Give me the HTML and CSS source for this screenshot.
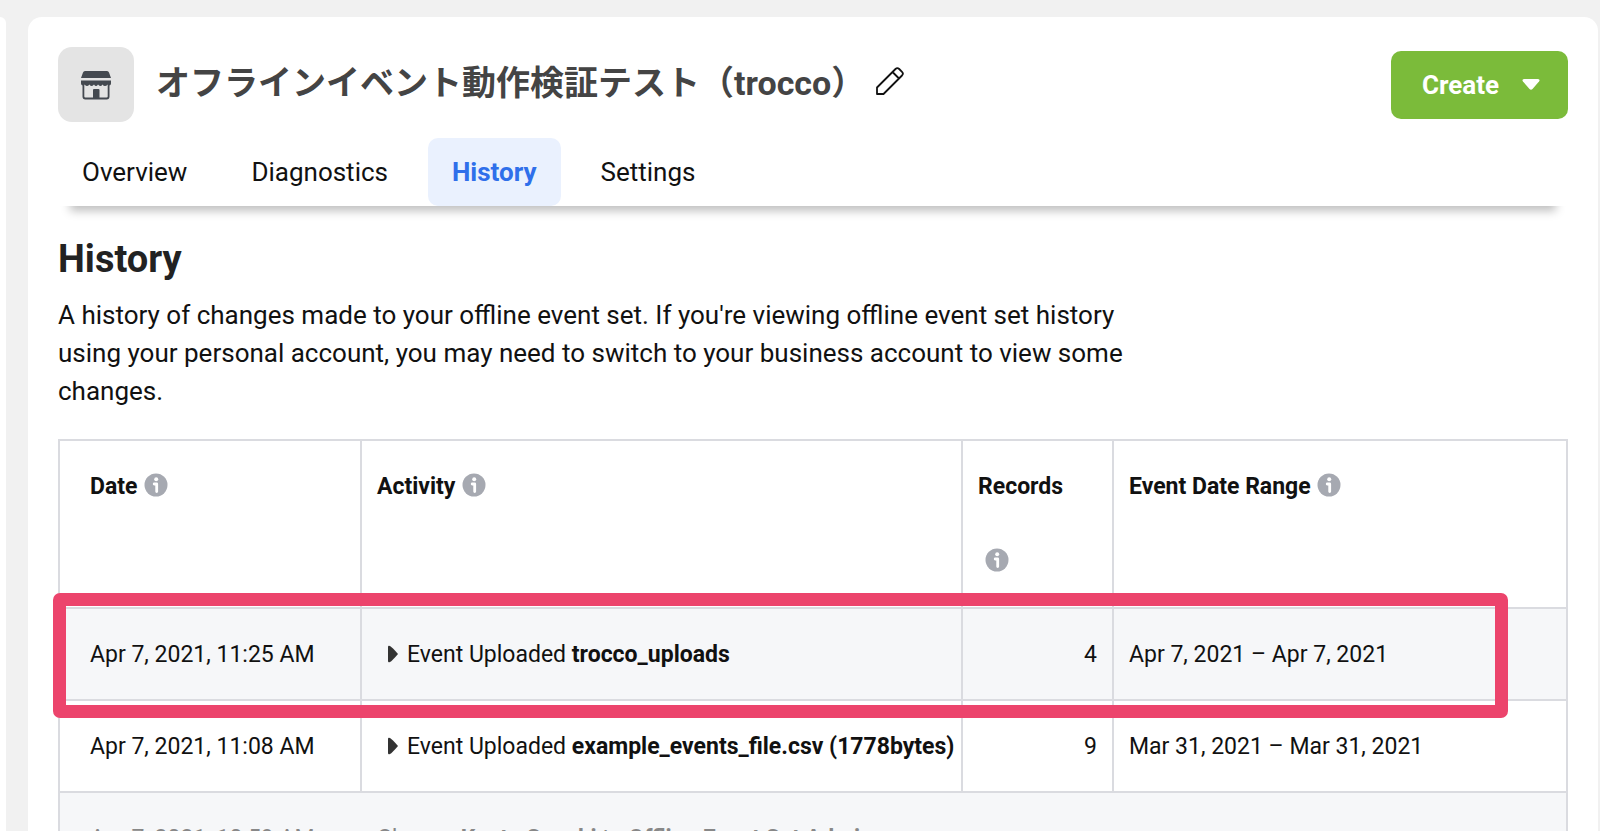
FILE: index.html
```
<!DOCTYPE html>
<html lang="en">
<head>
<meta charset="utf-8">
<title>History</title>
<link rel="stylesheet" href="styles.css">
</head>
<body>
<svg class="defs" aria-hidden="true">
  <symbol id="info" viewBox="0 0 24 24"><circle cx="12" cy="12" r="11.500" fill="#a6a9b1"/><circle cx="12.200" cy="6.200" r="2" fill="#fff"/><path d="M10.200 11h2.500v7.500" fill="none" stroke="#fff" stroke-width="2.800" stroke-linecap="round" stroke-linejoin="round"/></symbol>
  <symbol id="arrow" viewBox="0 0 12 18"><path d="M1 2Q1 0 3 1Q5 2 11 9Q5 16 3 17Q1 18 1 16Z" fill="#333"/></symbol>
</svg>
<div class="layout">
  <aside class="side"></aside>
  <main class="card">
    <header class="head">
      <div class="title-row">
        <div class="badge">
          <svg width="32" height="32" viewBox="0 0 32 32">
            <path d="M5 2h22q1.500 0 2 1.500L31 9H1L3 3.500Q3.500 2 5 2Z" fill="#444950"/>
            <path d="M1 11.500h30v3q0 2-2 2-1 0-1.500-1-1 1.500-2.500 1.500t-2.500-1.500q-1 1.500-2 1.500t-2.500-1.500q-1 1.500-2 1.500t-2-1.500q-1.500 1.500-2.500 1.500t-2-1.500q-1.500 1.500-2.500 1.500t-2.500-1.500q-.5 1-1.500 1-2 0-2-2Z" fill="#444950"/>
            <path d="M3.400 15v12.500q0 2 2 2h21.200q2 0 2-2V15" fill="none" stroke="#444950" stroke-width="1.800"/>
            <path d="M13 30v-9q0-1 1-1h4.500q1 0 1 1v9Z" fill="#444950"/>
          </svg>
        </div>
        <h1 class="title">オフラインイベント動作検証テスト（trocco）</h1>
        <button class="edit" aria-label="Edit name">
          <svg width="30" height="30" viewBox="0 0 30 30" fill="none" stroke="#111" stroke-width="1.800" stroke-linejoin="round"><path d="M2 28V21.500L20.500 3Q22.300 1.200 24.200 3L27 5.800Q28.800 7.600 27 9.500L8.500 28ZM17.500 6l6.500 6.500"/></svg>
        </button>
        <button class="create">Create
          <svg width="18" height="12" viewBox="0 0 18 12"><path d="M2 0h14q2.500 .5 1 2.500L10.500 10q-1.500 1.600-3 0L1 2.500Q-.5 .5 2 0Z" fill="#fff"/></svg>
        </button>
      </div>
      <nav class="tabs">
        <a class="tab" href="#overview">Overview</a>
        <a class="tab" href="#diagnostics">Diagnostics</a>
        <a class="tab active" href="#history">History</a>
        <a class="tab" href="#settings">Settings</a>
      </nav>
    </header>
    <section class="content">
      <h2 class="heading">History</h2>
      <p class="intro">A history of changes made to your offline event set. If you're viewing offline event set history using your personal account, you may need to switch to your business account to view some changes.</p>
      <div class="table-wrap">
        <table class="log">
          <colgroup><col class="c-date"><col class="c-activity"><col class="c-records"><col></colgroup>
          <thead>
            <tr>
              <th>Date <svg class="info"><use href="#info"/></svg></th>
              <th>Activity <svg class="info"><use href="#info"/></svg></th>
              <th>Records <svg class="info below"><use href="#info"/></svg></th>
              <th>Event Date Range <svg class="info"><use href="#info"/></svg></th>
            </tr>
          </thead>
          <tbody>
            <tr class="shade"><td>Apr 7, 2021, 11:25 AM</td><td><svg class="arrow"><use href="#arrow"/></svg>Event Uploaded <b>trocco_uploads</b></td><td class="num">4</td><td>Apr 7, 2021 – Apr 7, 2021</td></tr>
            <tr><td>Apr 7, 2021, 11:08 AM</td><td><svg class="arrow"><use href="#arrow"/></svg>Event Uploaded <b>example_events_file.csv (1778bytes)</b></td><td class="num">9</td><td>Mar 31, 2021 – Mar 31, 2021</td></tr>
            <tr class="shade muted"><td>Apr 7, 2021, 10:59 AM</td><td colspan="3">Change <b>Kento Suzuki</b> to <b>Offline Event Set Admin</b></td></tr>
          </tbody>
        </table>
        <div class="highlight"></div>
      </div>
    </section>
  </main>
</div>
</body>
</html>
```

FILE: styles.css
```
* { box-sizing: border-box; }
html, body { height: 100%; }
body {
  margin: 0;
  overflow: hidden;
  background: #f1f1f1;
  color: #111;
  font-family: Roboto, "Noto Sans CJK JP", sans-serif;
  font-size: 23px;
}
.defs { position: absolute; width: 0; height: 0; }
.layout { display: flex; gap: 22px; padding: 17px 2px 0 0; min-height: 100%; }
.side { width: 6px; background: #fff; border-radius: 0 14px 0 0; }
.card {
  position: relative; z-index: 0; flex: 1; min-width: 0;
  background: #fff; border-radius: 14px 14px 0 0; padding: 30px 30px 0;
}
.title-row { display: flex; align-items: center; height: 75px; }
.badge {
  display: flex; align-items: center; justify-content: center;
  width: 76px; height: 75px; border-radius: 14px; background: #e4e4e4;
}
.title { margin: 0 0 4px 22px; font-size: 34px; line-height: 48px; font-weight: 700; color: #444; white-space: nowrap; }
.edit { margin: 0 0 8px 10px; padding: 0; border: 0; background: none; line-height: 0; }
.create {
  display: flex; align-items: center; gap: 23px;
  margin-left: auto; height: 68px; padding: 0 28px 0 31px;
  border: 0; border-radius: 10px; background: #7bbb3a; color: #fff;
  font: 700 26px/30px Roboto, sans-serif;
}
.tabs { display: flex; gap: 16px; margin-top: 16px; position: relative; background: #fff; }
.head { position: relative; }
.tabs::after {
  content: ""; position: absolute; z-index: -1; left: 12px; right: 12px; bottom: 0; height: 20px;
  box-shadow: 0 5px 10px rgba(0, 0, 0, .25);
}
.tab {
  padding: 0 24px; border-radius: 10px; font-size: 26px; line-height: 68px;
  color: #111; text-decoration: none;
}
.tab.active { background: #eaf1fe; color: #2f6fea; font-weight: 700; }
.heading { margin: 28px 0 0; font-size: 38px; line-height: 50px; color: #222; }
.intro { margin: 12px 0 0; max-width: 1110px; font-size: 26px; line-height: 38px; }
.table-wrap { position: relative; margin-top: 29px; }
.log { width: 100%; table-layout: fixed; border-collapse: collapse; border: 2px solid #dadbe0; }
.c-date { width: 302px; }
.c-activity { width: 601px; }
.c-records { width: 151px; }
.log th, .log td { border: 2px solid #dadbe0; padding: 0 15px; text-align: left; white-space: nowrap; }
.log th { height: 168px; padding-top: 26px; vertical-align: top; line-height: 40px; }
.log td { height: 92px; }
.log th:first-child, .log td:first-child { padding-left: 30px; }
.log .num { text-align: right; }
.shade { background: #f6f7f9; }
.log .muted td { color: #888; }
.log .muted td:first-child { border-right-style: none; }
.log .muted td:last-child { border-left-style: none; padding-left: 16px; }
.info { width: 24px; height: 24px; margin-left: 1px; vertical-align: -3px; }
.info.below { display: block; margin: 41px 0 0 7px; }
.arrow { width: 12px; height: 18px; margin: 0 8px 0 10px; vertical-align: -1px; }
.highlight {
  position: absolute; left: -5px; right: 60px; top: 154px; height: 125px;
  border: 13px solid #ec446c; border-radius: 7px;
}
```
